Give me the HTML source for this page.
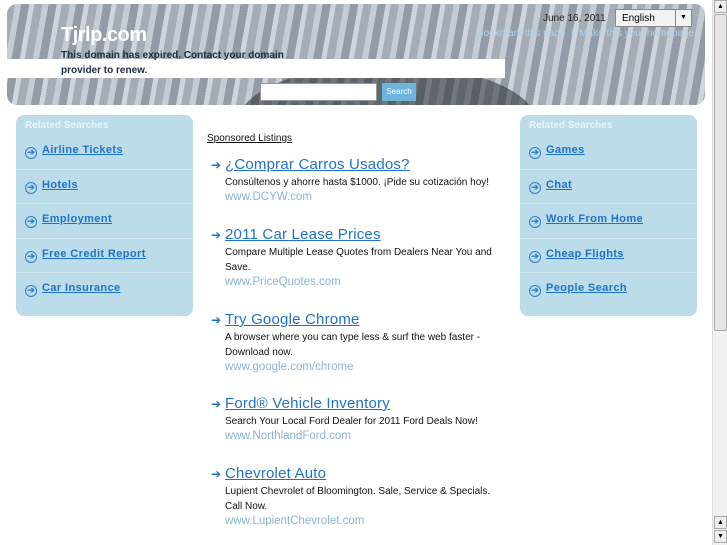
<!DOCTYPE html>
<html><head><meta charset="utf-8"><style>
*{margin:0;padding:0;box-sizing:border-box}
body{width:727px;height:545px;overflow:hidden;background:#fff;font-family:"Liberation Sans",sans-serif;position:relative}
.hdr{position:absolute;left:7px;top:4px;width:698px;height:101px;border-radius:10px;overflow:hidden;
background:repeating-linear-gradient(100deg,#a4acb6 0 8px,#c6ccd3 8px 14px,#939ca6 14px 22px,#cfd5da 22px 27px);}
.hdr:after{content:"";position:absolute;left:230px;top:60px;width:300px;height:120px;border-radius:50%;background:rgba(40,45,50,.55)}
.strip{position:absolute;left:7px;top:59px;width:498px;height:19px;background:#fff;z-index:2}
.title{position:absolute;left:61px;top:24px;color:#fff;font-size:20px;font-weight:bold;z-index:3;letter-spacing:-.5px}
.exp{position:absolute;left:61px;top:48px;font-size:10px;font-weight:bold;color:#1a2a40;line-height:15px;z-index:3;width:260px}
.date{position:absolute;left:543px;top:13px;font-size:10px;color:#222;z-index:3}
.sel{position:absolute;left:615px;top:9px;width:77px;height:18px;background:#f2f2f2;border:1px solid #888;font-size:10px;padding:3px 6px;z-index:3}
.sel b{position:absolute;right:0;top:0;width:16px;height:16px;border-left:1px solid #888;font-size:7px;text-align:center;line-height:16px}
.bm{position:absolute;left:477px;top:28px;font-size:10px;color:#a8d4ee;z-index:3}
.sbox{position:absolute;left:260px;top:83px;width:117px;height:18px;background:#fff;border:1px solid #999;z-index:3}
.sbtn{position:absolute;left:382px;top:83px;width:34px;height:18px;background:#6eb5dc;color:#fff;font-size:8px;text-align:center;line-height:18px;z-index:3}
.side{position:absolute;top:115px;width:177px;height:201px;background:#bcdcea;border-radius:8px}
.side h4{color:#e8f4fa;font-size:10px;padding:5px 9px;height:20px}
.side div{height:34.5px;border-bottom:1px solid #d4e9f2;padding:9px 0 0 9px;font-size:11px;font-weight:bold;letter-spacing:.4px}
.side div:nth-child(6){border-bottom:none}
.side i{display:inline-block;width:12px;height:12px;border:1.5px solid #2a7fc8;border-radius:50%;color:#2a7fc8;font-style:normal;font-size:9px;line-height:9px;text-align:center;vertical-align:-2px;margin-right:5px;letter-spacing:0}
.side a{color:#1f73c6;text-decoration:underline}
.sp{position:absolute;left:207px;top:133px;font-size:10px;color:#111;text-decoration:underline}
.ad{position:absolute;left:211px;width:290px}
.ad .t{font-size:15px;color:#1f73c6;text-decoration:underline;letter-spacing:.2px}
.ad .t span{font-size:12px;text-decoration:none;display:inline-block;width:14px}
.ad .d{font-size:10px;color:#111;margin-left:14px;line-height:15px;margin-top:2px}
.ad .u{font-size:11.5px;color:#8ab4d4;margin-left:14px;margin-top:1px}
.sb{position:absolute;left:712px;top:0;width:15px;height:545px;background:#f1f1f1;border-left:1px solid #ddd}
.sb .th{position:absolute;left:1px;top:14px;width:13px;height:317px;background:#e6e6e6;border:1px solid #aaa;border-radius:2px}
.sb .ar{position:absolute;left:1px;width:13px;height:13px;background:#eee;border:1px solid #aaa;font-size:7px;text-align:center;line-height:12px}
</style></head><body>
<div class="hdr"></div><div class="strip"></div>
<div class="title">Tjrlp.com</div>
<div class="exp">This domain has expired. Contact your domain provider to renew.</div>
<div class="date">June 16, 2011</div>
<div class="sel">English<b>▼</b></div>
<div class="bm">Bookmark this page &nbsp;|&nbsp; Make this your homepage</div>
<div class="sbox"></div><div class="sbtn">Search</div>
<div class="side" style="left:16px"><h4>Related Searches</h4>
<div><i>➔</i><a>Airline Tickets</a></div><div><i>➔</i><a>Hotels</a></div><div><i>➔</i><a>Employment</a></div><div><i>➔</i><a>Free Credit Report</a></div><div><i>➔</i><a>Car Insurance</a></div></div>
<div class="side" style="left:520px"><h4>Related Searches</h4>
<div><i>➔</i><a>Games</a></div><div><i>➔</i><a>Chat</a></div><div><i>➔</i><a>Work From Home</a></div><div><i>➔</i><a>Cheap Flights</a></div><div><i>➔</i><a>People Search</a></div></div>
<div class="sp">Sponsored Listings</div>
<div class="ad" style="top:156px"><div class="t"><span>➔</span>¿Comprar Carros Usados?</div><div class="d">Consúltenos y ahorre hasta $1000. ¡Pide su cotización hoy!</div><div class="u">www.DCYW.com</div></div>
<div class="ad" style="top:226px"><div class="t"><span>➔</span>2011 Car Lease Prices</div><div class="d">Compare Multiple Lease Quotes from Dealers Near You and Save.</div><div class="u">www.PriceQuotes.com</div></div>
<div class="ad" style="top:311px"><div class="t"><span>➔</span>Try Google Chrome</div><div class="d">A browser where you can type less &amp; surf the web faster - Download now.</div><div class="u">www.google.com/chrome</div></div>
<div class="ad" style="top:395px"><div class="t"><span>➔</span>Ford® Vehicle Inventory</div><div class="d">Search Your Local Ford Dealer for 2011 Ford Deals Now!</div><div class="u">www.NorthlandFord.com</div></div>
<div class="ad" style="top:465px"><div class="t"><span>➔</span>Chevrolet Auto</div><div class="d">Lupient Chevrolet of Bloomington. Sale, Service &amp; Specials. Call Now.</div><div class="u">www.LupientChevrolet.com</div></div>
<div class="sb"><div class="ar" style="top:0">▲</div><div class="th"></div><div class="ar" style="top:516px">▲</div><div class="ar" style="top:530px">▼</div></div>
</body></html>
